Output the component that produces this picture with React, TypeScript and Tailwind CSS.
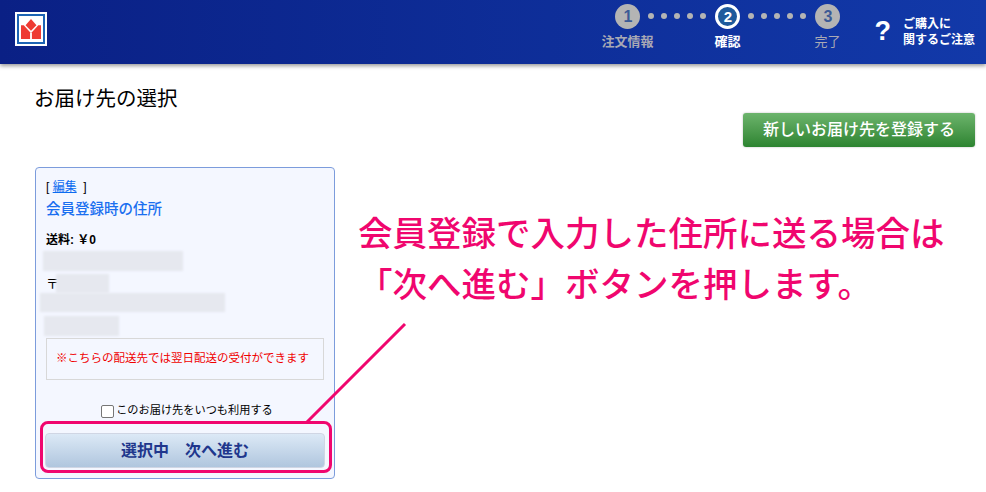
const cjk = "font-['Liberation_Sans','Noto_Sans_CJK_JP',sans-serif]";

function Dots() {
  return (
    <div className="flex w-[59px] justify-between pr-[1px] pb-[1px]">
      {Array.from({ length: 5 }).map((_, i) => (
        <div key={i} className="h-[6px] w-[6px] rounded-full bg-[#b4b4b4]" />
      ))}
    </div>
  );
}

function Step({ n, active }: { n: number; active?: boolean }) {
  return (
    <div
      className={
        active
          ? "flex h-[25px] w-[25px] items-center justify-center rounded-full border-[3px] border-white bg-[#1f5a9c] text-[15px] font-bold leading-none text-white"
          : "flex h-[25px] w-[25px] items-center justify-center rounded-full bg-[#b4b4b4] text-[16px] font-bold leading-none text-[#3b5a96]"
      }
    >
      {n}
    </div>
  );
}

function Logo() {
  return (
    <div className="mt-[12px] ml-[15px] h-[34px] w-[32px] border-[2px] border-white bg-white">
      <div className="h-full w-full border-[2px] border-[#1c64b4] bg-white p-[2px]">
        <svg viewBox="0 0 22 22" className="h-full w-full">
          <path d="M11 0 L17 7 L11 13 L5 7 Z" fill="#ee3b33" />
          <path d="M0 7 L3 7 L10 14.5 L10 22 L0 22 Z" fill="#ee3b33" />
          <path d="M22 7 L19 7 L12 14.5 L12 22 L22 22 Z" fill="#ee3b33" />
        </svg>
      </div>
    </div>
  );
}

function Header() {
  return (
    <header className="flex h-[64px] items-start justify-between bg-gradient-to-r from-[#0a2085] to-[#1239a9] shadow-[0_2px_4px_rgba(0,0,0,0.4)]">
      <Logo />
      <div className="flex">
        <div className="mr-[34px] mt-[4px] flex flex-col">
          <div className="ml-[14px] flex items-center gap-[8px]">
            <Step n={1} />
            <Dots />
            <Step n={2} active />
            <Dots />
            <Step n={3} />
          </div>
          <div className="mt-[4px] flex text-[13px] font-bold leading-[18px]">
            <div className="w-[52px] whitespace-nowrap text-[#a9a9b4]">注文情報</div>
            <div className="ml-[61px] w-[26px] whitespace-nowrap text-white">確認</div>
            <div className="ml-[74px] w-[26px] whitespace-nowrap font-normal text-[#a9a9b4]">完了</div>
          </div>
        </div>
        <div className="mr-[11px] mt-[12px] flex items-center text-white">
          <div className="mr-[12px] text-[27px] font-bold leading-none">?</div>
          <div className="text-[12px] font-bold leading-[16px]">
            ご購入に
            <br />
            関するご注意
          </div>
        </div>
      </div>
    </header>
  );
}

function Blur({ className }: { className: string }) {
  return <div className={`bg-[#e6e8ef] blur-[1px] ${className}`} />;
}

function AddressCard() {
  return (
    <div className="h-[312px] w-[300px] rounded-[4px] border border-[#7c9cdc] bg-[#f4f7ff] text-black">
      <div className="ml-[10px] mt-[11px] text-[12px] leading-[16px]">
        [&nbsp;<span className="text-[#0b6bf0] underline">編集</span>&nbsp;&nbsp;]
      </div>
      <div className="ml-[10px] mt-[5px] text-[14.5px] font-medium leading-[19px] text-[#1a6ff0]">
        会員登録時の住所
      </div>
      <div className="ml-[10px] mt-[13px] text-[12px] font-bold leading-[16px]">送料: ￥0</div>
      <Blur className="ml-[7px] mt-[3px] h-[20px] w-[140px]" />
      <div className="ml-[10px] mt-[3px] flex h-[19px] text-[13px] leading-[20px]">
        〒
        <Blur className="ml-[-3px] h-[19px] w-[53px]" />
      </div>
      <Blur className="ml-[4px] h-[19px] w-[185px]" />
      <Blur className="ml-[8px] mt-[4px] h-[20px] w-[75px]" />
      <div className="mx-[10px] mt-[2px] flex h-[42px] w-[278px] items-center justify-center border border-[#d8d8d8] pr-[5px] text-[11.5px] text-[#f00000]">
        ※こちらの配送先では翌日配送の受付ができます
      </div>
      <div className="mt-[23px] flex h-[16px] items-center justify-center pl-[4px] text-[11.2px] leading-none">
        <input type="checkbox" className="mr-[2px] h-[13px] w-[13px] appearance-none rounded-[2px] border border-[#767676] bg-white" />
        このお届け先をいつも利用する
      </div>
      <button className="ml-[9px] mt-[14px] flex h-[35px] w-[280px] items-center justify-center rounded-[4px] border border-[#d0d6e4] bg-gradient-to-b from-[#dce9f6] to-[#b0c6de] text-[16px] font-bold text-[#20368c]">
        選択中　次へ進む
      </button>
    </div>
  );
}

export default function App() {
  return (
    <div className={`relative h-[492px] w-[986px] overflow-hidden bg-white ${cjk}`}>
      <Header />
      <main className="px-[35px]">
        <h1 className="ml-[-1px] mt-[22px] text-[20.5px] font-normal leading-[26px] text-black">お届け先の選択</h1>
        <div className="mr-[-24px] mt-[1px] flex justify-end">
          <button className="h-[34px] w-[232px] rounded-[3px] bg-gradient-to-b from-[#6cb46c] to-[#2c8430] text-[16px] font-medium text-white shadow-[0_0_2px_rgba(0,0,0,0.3)]">
            新しいお届け先を登録する
          </button>
        </div>
        <div className="mt-[20px]">
          <AddressCard />
        </div>
      </main>

      {/* annotation overlay */}
      <div className="absolute left-[40px] top-[421px] h-[52px] w-[292px] rounded-[8px] border-[3px] border-[#f0066e]" />
      <svg className="absolute left-[300px] top-[320px]" width="110" height="106" viewBox="0 0 110 106">
        <line x1="105" y1="4" x2="7" y2="102" stroke="#f0066e" strokeWidth="3" />
      </svg>
      <div className="absolute left-[358px] top-[209px] whitespace-nowrap text-[34.5px] font-medium leading-[51px] text-[#f0066e]">
        会員登録で入力した住所に送る場合は
        <br />
        「次へ進む」ボタンを押します。
      </div>
    </div>
  );
}
